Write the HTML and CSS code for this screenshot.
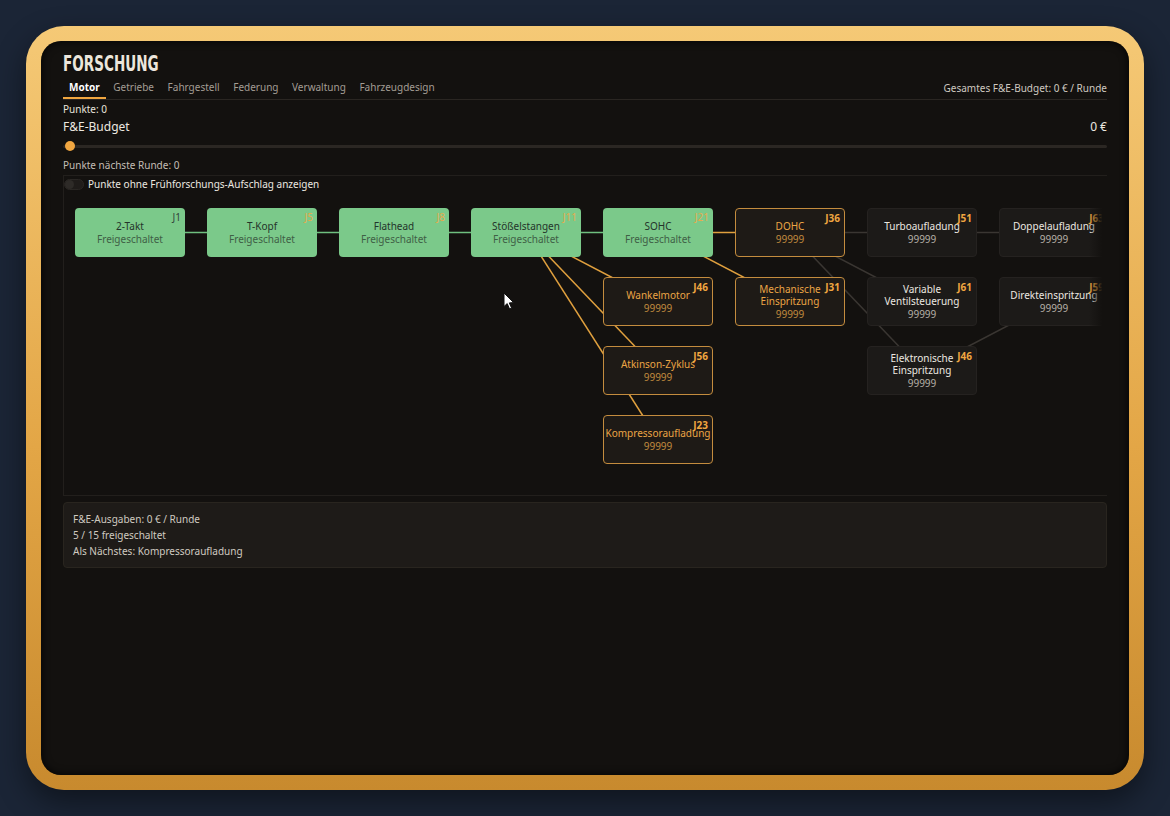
FILE: index.html
```html
<!DOCTYPE html>
<html>
<head>
  <title>Forschung</title>
  <link rel="stylesheet" href="styles.css">
</head>
<body>
  <div class="frame">
    <div class="screen">
      <h1><span>FORSCHUNG</span></h1>

      <div class="tab-row">
        <div class="tabs">
          <div class="tab active">Motor</div>
          <div class="tab">Getriebe</div>
          <div class="tab">Fahrgestell</div>
          <div class="tab">Federung</div>
          <div class="tab">Verwaltung</div>
          <div class="tab">Fahrzeugdesign</div>
        </div>
        <div class="total-budget">Gesamtes F&amp;E-Budget: 0 € / Runde</div>
      </div>

      <div class="points">Punkte: 0</div>
      <div class="budget-row">
        <div>F&amp;E-Budget</div>
        <div>0 €</div>
      </div>
      <div class="slider"><div class="thumb"></div></div>
      <div class="points next">Punkte nächste Runde: 0</div>

      <div class="canvas">
        <div class="toggle-row">
          <div class="toggle"><div class="knob"></div></div>
          <span>Punkte ohne Frühforschungs-Aufschlag anzeigen</span>
        </div>

        <div class="tree">
          <svg class="edges" width="1100" height="260">
            <g stroke="#6fbf7f" stroke-width="1.5">
              <line x1="55" y1="24.5" x2="583" y2="24.5"/>
            </g>
            <g stroke="#3a3632" stroke-width="1.5">
              <line x1="715" y1="24.5" x2="979" y2="24.5"/>
              <line x1="715" y1="24.5" x2="847" y2="93.5"/>
              <line x1="715" y1="24.5" x2="847" y2="162.5"/>
              <line x1="847" y1="162.5" x2="979" y2="93.5"/>
            </g>
            <g stroke="#e0a03e" stroke-width="1.5">
              <line x1="583" y1="24.5" x2="715" y2="24.5"/>
              <line x1="451" y1="24.5" x2="583" y2="93.5"/>
              <line x1="451" y1="24.5" x2="583" y2="162.5"/>
              <line x1="451" y1="24.5" x2="583" y2="231.5"/>
              <line x1="583" y1="24.5" x2="715" y2="93.5"/>
            </g>
          </svg>

          <!-- unlocked -->
          <div class="node done c0 r0"><span class="tag dark">J1</span><div class="name">2-Takt</div><div class="sub">Freigeschaltet</div></div>
          <div class="node done c1 r0"><span class="tag">J5</span><div class="name">T-Kopf</div><div class="sub">Freigeschaltet</div></div>
          <div class="node done c2 r0"><span class="tag">J8</span><div class="name">Flathead</div><div class="sub">Freigeschaltet</div></div>
          <div class="node done c3 r0"><span class="tag">J11</span><div class="name">Stößelstangen</div><div class="sub">Freigeschaltet</div></div>
          <div class="node done c4 r0"><span class="tag">J21</span><div class="name">SOHC</div><div class="sub">Freigeschaltet</div></div>

          <!-- available -->
          <div class="node open c5 r0"><span class="tag">J36</span><div class="name">DOHC</div><div class="sub">99999</div></div>
          <div class="node open c4 r1"><span class="tag">J46</span><div class="name">Wankelmotor</div><div class="sub">99999</div></div>
          <div class="node open c5 r1"><span class="tag">J31</span><div class="name">Mechanische<br>Einspritzung</div><div class="sub">99999</div></div>
          <div class="node open c4 r2"><span class="tag">J56</span><div class="name">Atkinson-Zyklus</div><div class="sub">99999</div></div>
          <div class="node open c4 r3"><span class="tag">J23</span><div class="name">Kompressoraufladung</div><div class="sub">99999</div></div>

          <!-- locked -->
          <div class="node locked c6 r0"><span class="tag">J51</span><div class="name">Turboaufladung</div><div class="sub">99999</div></div>
          <div class="node locked c7 r0"><span class="tag">J63</span><div class="name">Doppelaufladung</div><div class="sub">99999</div></div>
          <div class="node locked c6 r1"><span class="tag">J61</span><div class="name">Variable<br>Ventilsteuerung</div><div class="sub">99999</div></div>
          <div class="node locked c7 r1"><span class="tag">J59</span><div class="name">Direkteinspritzung</div><div class="sub">99999</div></div>
          <div class="node locked c6 r2"><span class="tag">J46</span><div class="name">Elektronische<br>Einspritzung</div><div class="sub">99999</div></div>

          <svg class="cursor" width="12" height="18" viewBox="0 0 12 18">
            <path d="M1 1 L1 14.5 L4.2 11.6 L6.6 17 L8.6 16.1 L6.3 10.9 L10.6 10.6 Z" fill="#fff" stroke="#111" stroke-width="1"/>
          </svg>
        </div>
        <div class="fade"></div>
      </div>

      <div class="summary">
        <div>F&amp;E-Ausgaben: 0 € / Runde</div>
        <div>5 / 15 freigeschaltet</div>
        <div>Als Nächstes: Kompressoraufladung</div>
      </div>
    </div>
  </div>
</body>
</html>
```

FILE: styles.css
```css
body {
  margin: 0;
  padding: 26px;
  background: #1b2536;
  font-family: "Noto Sans", "Open Sans", sans-serif;
  color: #e8e4dc;
}
.frame {
  width: 1118px;
  height: 764px;
  box-sizing: border-box;
  padding: 15px;
  border-radius: 38px;
  background: linear-gradient(180deg, #f5c976 0%, #e3a646 55%, #c88a2e 100%);
  box-shadow: 0 12px 30px rgba(0,0,0,0.45);
}
.screen {
  height: 100%;
  box-sizing: border-box;
  padding: 10px 22px 0 22px;
  border-radius: 20px;
  background: #13110f;
  box-shadow: inset 0 0 8px rgba(0,0,0,0.9);
}
h1 {
  margin: 0;
  height: 26px;
  font-family: "DejaVu Sans", sans-serif;
  font-size: 21px;
  line-height: 26px;
  font-weight: bold;
  color: #ece6dc;
}
h1 span {
  display: inline-block;
  transform: scaleX(0.645);
  transform-origin: left center;
}
.tab-row {
  display: flex;
  justify-content: space-between;
  align-items: flex-end;
  margin-top: 3px;
  border-bottom: 1px solid #2a2622;
}
.tabs {
  display: flex;
  gap: 1.6px;
}
.tab {
  padding: 0 6px 3px 6px;
  font-size: 10px;
  line-height: 14px;
  color: #a39d94;
  border-bottom: 2px solid transparent;
}
.tab.active {
  color: #fff;
  font-weight: bold;
  border-bottom-color: #f0a640;
}
.total-budget {
  font-size: 10px;
  line-height: 14px;
  padding-bottom: 4px;
  color: #cfc9c0;
}
.points {
  margin-top: 2px;
  font-size: 10px;
  line-height: 14px;
  color: #e8e4dc;
}
.points.next {
  margin-top: 10px;
  color: #c4beb5;
}
.budget-row {
  display: flex;
  justify-content: space-between;
  margin-top: 2px;
  font-size: 12px;
  line-height: 18px;
  color: #ece8e0;
}
.slider {
  position: relative;
  margin-top: 9px;
  height: 3px;
  border-radius: 2px;
  background: #2b2723;
}
.slider .thumb {
  position: absolute;
  left: 2px;
  top: -4px;
  width: 10px;
  height: 10px;
  border-radius: 50%;
  background: #f0a640;
}
.canvas {
  position: relative;
  margin-top: 3px;
  height: 321px;
  box-sizing: border-box;
  border: 1px solid #221f1c;
  border-right: none;
  overflow: hidden;
}
.toggle-row {
  display: flex;
  align-items: center;
  gap: 4px;
  padding-top: 1px;
  font-size: 10px;
  line-height: 14px;
  color: #ece8e0;
}
.toggle {
  width: 20px;
  height: 11px;
  box-sizing: border-box;
  border-radius: 6px;
  background: #1f1c1a;
  border: 1px solid #2a2724;
}
.toggle .knob {
  width: 9px;
  height: 9px;
  border-radius: 50%;
  background: #2e2b28;
}
.tree {
  position: relative;
  margin: 17px 0 0 11px;
  height: 270px;
}
.edges {
  position: absolute;
  left: 0;
  top: 0;
  overflow: visible;
}
.node {
  position: absolute;
  width: 110px;
  height: 49px;
  box-sizing: border-box;
  padding-top: 2px;
  border-radius: 4px;
  display: flex;
  flex-direction: column;
  align-items: center;
  justify-content: center;
  text-align: center;
}
.node .name {
  font-size: 10px;
  line-height: 11.5px;
}
.node .sub {
  font-size: 10px;
  line-height: 13px;
  margin-top: 1px;
}
.node .tag {
  position: absolute;
  top: 3px;
  right: 4px;
  font-size: 10px;
  font-weight: bold;
  line-height: 12px;
  color: #f0a640;
}
.node.done {
  background: #7bc98a;
  color: #24342a;
}
.node.done .sub {
  color: #3f6046;
}
.node.done .tag {
  font-weight: normal;
  color: #e6ab4d;
}
.node.done .tag.dark {
  color: #34443a;
}
.node.open {
  background: #1e1a16;
  border: 1px solid #c48c3e;
  color: #eba545;
}
.node.open .sub {
  color: #c08a3e;
}
.node.locked {
  background: #1c1a18;
  border: 1px solid #252220;
  color: #ece8e0;
}
.node.locked .sub {
  color: #b5afa6;
}
.c0 { left: 0; }
.c1 { left: 132px; }
.c2 { left: 264px; }
.c3 { left: 396px; }
.c4 { left: 528px; }
.c5 { left: 660px; }
.c6 { left: 792px; }
.c7 { left: 924px; }
.r0 { top: 0; }
.r1 { top: 69px; }
.r2 { top: 138px; }
.r3 { top: 207px; }
.cursor {
  position: absolute;
  left: 428px;
  top: 84px;
}
.fade {
  position: absolute;
  top: 0;
  right: 0;
  bottom: 0;
  width: 18px;
  background: linear-gradient(90deg, rgba(19,17,15,0) 0%, #13110f 75%);
}
.summary {
  margin-top: 6px;
  padding: 8px 9px;
  border: 1px solid #29251f;
  border-radius: 4px;
  background: #1e1b18;
  font-size: 10px;
  line-height: 16px;
  color: #d0cac0;
}
```
